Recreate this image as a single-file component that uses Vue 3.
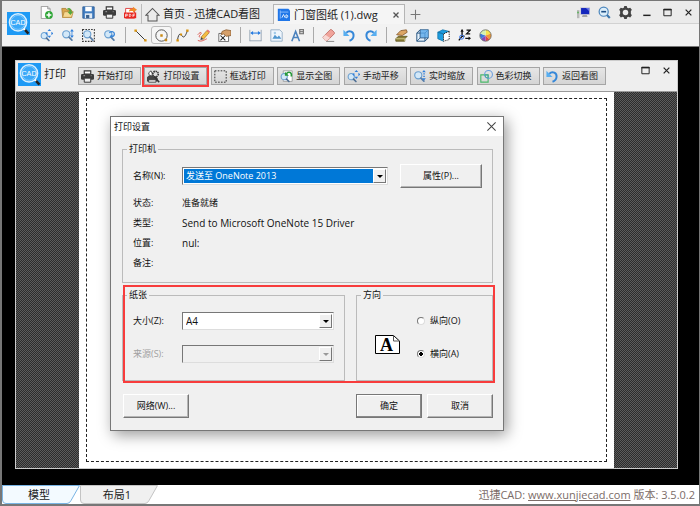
<script setup>
import { ref } from 'vue'

const lens = '<circle cx="6.5" cy="6.5" r="4.4" fill="#d3e8f8" stroke="#6a9fd0" stroke-width="1.4"/><path d="M9.800 10l3.600 3.600" stroke="#5a7fa8" stroke-width="2.2" stroke-linecap="round"/>'
const smallLens = '<circle cx="5.2" cy="8.2" r="3.8" fill="#d3e8f8" stroke="#6a9fd0" stroke-width="1.3"/><path d="M8 11.200l3 3" stroke="#4f6f94" stroke-width="2" stroke-linecap="round"/>'
const printer = '<path d="M4 1h8v4H4z" fill="#fff" stroke="#333" stroke-width="1.4"/><rect x="0" y="5" width="16" height="7" rx="1.6" fill="#3d3d3d"/><path d="M4 10h8v5H4z" fill="#eee" stroke="#333" stroke-width="1.2"/><path d="M3 7h2M12 7h1" stroke="#bbb"/>'
const panArrows = '<path d="M11.500 0l2.200 2.600H9.300zM11.500 11L9.300 8.400h4.400zM6.500 5.500L9 3.300v4.400zM16.500 5.500L14 3.300v4.400z" fill="#2f7fdc"/>'

const icons = {
  logo: '<rect width="24" height="24" fill="#1e9af5"/><circle cx="11.5" cy="10.8" r="9" fill="#3aa8f8" stroke="#d9f0ff" stroke-width="1.5"/><circle cx="11.5" cy="10.8" r="7.3" fill="none" stroke="#8fd0ff" stroke-width=".8"/><path d="M17.5 17.5l2 2" stroke="#fff" stroke-width="2"/><path d="M18.8 18.6l3.6 4" stroke="#222" stroke-width="2.6"/><text x="11.5" y="13.6" font-size="7.5" text-anchor="middle" fill="#fff" font-family="Liberation Sans, sans-serif">CAD</text>',
  file: '<path d="M1.500.500h8l3 3v12h-11z" fill="#fdfdfd" stroke="#8d8d8d"/><path d="M9.500.500v3h3" fill="#ddd" stroke="#8d8d8d"/><circle cx="11" cy="11" r="4.800" fill="#2fa637"/><path d="M11 8v6M8 11h6" stroke="#fff" stroke-width="1.800"/>',
  open: '<path d="M1 3h5l1.500 2H13v9H2z" fill="#d9a74e" stroke="#ae8035"/><path d="M2 14l2-7h11l-2 7z" fill="#f6d891" stroke="#b98b40"/><path d="M7 4c2-3 6-2 6 3h2l-3.500 4L8 7h2.500C10.500 5 9 4 7 4z" fill="#55a63d"/>',
  save: '<path d="M1 1h14v14H1z" fill="#3f7cc0" stroke="#2c5a92"/><path d="M4 1h8v5.500H4z" fill="#fff"/><path d="M3.500 9h9v6h-9z" fill="#dfe9f4"/><path d="M5 11h4v4H5z" fill="#3a628e"/>',
  print: printer,
  pdf: '<path d="M2 3h9l2 2v10H2z" fill="#fff" stroke="#d22"/><rect x="0" y="8" width="15" height="7" fill="#e8261f"/><path d="M2 13.500V10h2v2H2M6.500 10v3h1.200l.8-1v-1l-.8-1zM11 13.500V10h2.500M11 11.800h2" stroke="#fff" stroke-width=".9" fill="none"/><path d="M6 7c0-3 2-4 5-4V1l5 3.500L11 8V6c-2 0-3.500 0-5 1z" fill="#f08a28"/>',
  home: '<path d="M1 8.700L8 1.500l7 7.200h-2.200V15H3.200V8.700z" fill="none" stroke="#555" stroke-width="1.100"/>',
  dwg: '<path d="M1 1h13l2 2v13H1z" fill="#2076e8"/><path d="M4 3v10M4 5h10" stroke="#9cc6ff"/><path d="M6 12l2-4 2 4M11 8.500V12h1.200l1-1V9.500l-1-1z" fill="none" stroke="#fff"/>',
  monitor: '<path d="M0 5h3v10H0z" fill="#b8b8b8"/><rect x=".5" y="7" width="1.500" height="2" fill="#35b335"/><rect x="4" y="1.500" width="12" height="9.500" fill="#c9c9d6"/><rect x="5" y="2.500" width="10" height="7.500" fill="#1426bd"/><path d="M11 2.500h4v4z" fill="#6674e6"/><path d="M7 11h5l1 2.500H6z" fill="#a5a5a5"/>',
  zoomOut: '<circle cx="7" cy="7" r="5.600" fill="#dceefa" stroke="#4b86bd" stroke-width="1.500"/><path d="M4 7h6" stroke="#1d4e84" stroke-width="2"/><path d="M11 11l3.500 3.700" stroke="#3b76ac" stroke-width="2.600"/>',
  gear: '<path d="M6.500 0h3l.6 2.200 1.500.7 2.200-.9 2 2.500-1.200 2v3l1.200 2-2 2.500-2.200-.9-1.500.7L9.500 16h-3l-.6-2.200-1.500-.7-2.200.9-2-2.500 1.200-2v-3l-1.200-2L2.200 2l2.200.9 1.500-.7z" fill="#444"/><circle cx="8" cy="8" r="3.400" fill="#ededed"/>',
  minimize: '<path d="M4 11.500h9" stroke="#222" stroke-width="1.800"/>',
  maximize: '<path d="M3.500 4h9v8h-9z" fill="none" stroke="#222" stroke-width="1.200"/><path d="M3 4.500h10" stroke="#222" stroke-width="1.800"/>',
  close: '<path d="M4.500 4.500l7 7M11.500 4.500l-7 7" stroke="#222" stroke-width="1.500"/>',
  tabClose: '<path d="M3 3l10 10M13 3L3 13" stroke="#555" stroke-width="2.600"/>',
  plus: '<path d="M8 2v12M2 8h12" stroke="#777" stroke-width="1.300"/>',
  pan: smallLens + panArrows,
  zoomV: lens + '<path d="M13.500 0l2.300 3h-4.600zM13.500 11l-2.300-3h4.600zM13 3h1v5h-1z" fill="#2f7fdc"/>',
  zoomWin: '<path d="M.7.700h14.500v14.500H.700z" fill="none" stroke="#333" stroke-width="1.300" stroke-dasharray="2 1.500"/>' + lens,
  zoomBack: lens + '<path d="M8 5c1-3 6-2 6 1 0 2-1 3-3 3" fill="none" stroke="#3a86d8" stroke-width="1.600"/><path d="M11.500 6.500v5L8 9z" fill="#3a86d8"/>',
  line: '<path d="M2 2l12 12" stroke="#333" stroke-width="1.200"/><path d="M.500.500h3v3h-3zM12.500 12.500h3v3h-3z" fill="#d9930d"/>',
  circle: '<circle cx="8" cy="8" r="7" fill="none" stroke="#555" stroke-width="1.200"/><path d="M6.500 6.500h3v3h-3zM12 12h3v3h-3z" fill="#c98a16"/>',
  spline: '<path d="M2 13C3 6 5 5 7 8s4 3 7-6" fill="none" stroke="#333" stroke-width="1.200"/><path d="M.500 12.500h3v3h-3zM5 5.500h2.500V8H5zM12.500.500h3v3h-3z" fill="#d9930d"/>',
  pencil: '<path d="M5 10l7-8 3 2.500-7 8z" fill="#f5bd43" stroke="#a66e1b" stroke-width=".8"/><path d="M12 2l1.200-1.500 2.800 2.500-1 1.500z" fill="#e87474"/><path d="M5 10l-.8 3.500L8 12.500z" fill="#444"/><path d="M1 7c3-4 6-3 3 0s0 3 0 3M1 14c4 2 7 0 11-2" stroke="#d63b32" fill="none"/>',
  stamp: '<path d="M1 5.500h12v10H1z" fill="#fff" stroke="#555"/><path d="M3 8l6 6M9 8l-6 6" stroke="#222" stroke-width="1.300"/><path d="M5 3l5-2 6 1v6l-6 1-3-3-3 1z" fill="#d6a06a" stroke="#8c5e33"/>',
  dim: '<path d="M1 1v14M15 1v14M1 14.500h14" stroke="#8b9cae"/><path d="M3 5h10" stroke="#287ce0" stroke-width="1.300"/><path d="M1.500 5l3.500-2.500v5zM14.500 5L11 2.500v5z" fill="#287ce0"/>',
  image: '<path d="M1 1h11l3 3v11H1z" fill="#eef5fc" stroke="#8aa6bf"/><path d="M3 12l3-5 3 3 2-2 3 4z" fill="#4f96cf"/><circle cx="6" cy="5" r="1.500" fill="#a1c9e8"/>',
  text: '<path d="M1 15L5.700 3 10.500 15M2.800 10.500h6" fill="none" stroke="#4b82bd" stroke-width="1.900"/><path d="M10 0h6v6.500h-6z" fill="#777"/><path d="M11.500 2h3M11.500 4.500h3" stroke="#fff"/>',
  eraser: '<path d="M1 10l9-9q1-1 2 0l3 3q1 1 0 2l-8 8H4z" fill="#f0a39a" stroke="#bb6b63"/><path d="M1 10l3-3 6 4-4 3.500H4z" fill="#f7d6d1"/><path d="M5 15.300h10" stroke="#777"/>',
  undo: '<path d="M4 4.500c4-3.500 9.500-1 9 4-.3 3-2 5-5 6" fill="none" stroke="#3587d8" stroke-width="2.400"/><path d="M.500 1v7.500H8z" fill="#58aef0"/>',
  redo: '<path d="M12 4.500c-4-3.500-9.500-1-9 4 .3 3 2 5 5 6" fill="none" stroke="#3587d8" stroke-width="2.400"/><path d="M15.500 1v7.500H8z" fill="#58aef0"/>',
  layers: '<path d="M1 12l3-3h11l-3 3v3H1z" fill="#8a7e36" stroke="#5f551f"/><path d="M1 12h11v3" fill="none" stroke="#ddd49a"/><path d="M2 7l5-5 7-1 1 3-6 4z" fill="#dca565" stroke="#83562a"/>',
  cube: '<path d="M1 5h10v10H1zM1 5l4-4h10l-4 4M15 1v10l-4 4" fill="#e5f2fc" stroke="#26537f" stroke-width="1.200"/><path d="M5 1h10v10H5z" fill="#5aa8e8" opacity=".8"/><path d="M5 1v10h10M5 11l-4 4" stroke="#26537f" fill="none"/>',
  cubeDash: '<path d="M1 4l6-3 8 2v10l-7 2-7-3z" fill="#fff"/><path d="M1 4l6-3 8 2-7 3zM1 4l7 2v9l-7-3z" fill="#1d9de0" stroke="#1675a9"/><path d="M15 3v10l-7 2V6z" fill="#fff" stroke="#222" stroke-width="1.200" stroke-dasharray="1.500 1.200"/>',
  axes: '<path d="M5 1v8l-4 5M5 9h3" fill="none" stroke="#111" stroke-width="1.700"/><path d="M3 3.500L5 0l2 3.500z" fill="#111"/><circle cx="4.500" cy="10" r="2.500" fill="none" stroke="#3a77ee" stroke-width="1.200"/><path d="M10.500 1.500H15l-4.500 4.500H15M9 11.500h5" fill="none" stroke="#111" stroke-width="1.500"/><path d="M13 9.200l3 2.300-3 2.300z" fill="#111"/>',
  palette: '<circle cx="8" cy="8" r="7" fill="#fff"/><path d="M8 8V1a7 7 0 0 1 6.500 4.500z" fill="#f7e34c"/><path d="M8 8l6.500-2.500a7 7 0 0 1-1.500 7.400z" fill="#f19a36"/><path d="M8 8l5 4.900A7 7 0 0 1 8 15z" fill="#e04545"/><path d="M8 8v7a7 7 0 0 1-5.500-2.700z" fill="#8847ba"/><path d="M8 8l-5.500 4.300A7 7 0 0 1 1.500 5.500z" fill="#3d77dc"/><path d="M8 8L1.500 5.500A7 7 0 0 1 8 1z" fill="#d3f0b0"/><circle cx="8" cy="8" r="7" fill="none" stroke="#666"/>',
  printSetup: '<path d="M0 9l2-2h9l2 3v4H0z" fill="#444"/><path d="M2 12h9v3H2z" fill="#eee" stroke="#333"/><path d="M2 3.500L5 1l2 5-4 1z" fill="#fff" stroke="#333"/><circle cx="10.500" cy="5" r="3.400" fill="#ddd" stroke="#333" stroke-width="2" stroke-dasharray="1.800 .8"/><path d="M9 8l6 7" stroke="#333" stroke-width="1.800"/>',
  frame: '<path d="M1 1h14v14H1z" fill="none" stroke="#333" stroke-width="1.200" stroke-dasharray="2 1.600"/>',
  fit: '<path d="M4 1h11v13H4z" fill="#fff" stroke="#999"/>' + smallLens + '<path d="M8 5c1-3 5-3 6 0v3" fill="none" stroke="#28993a" stroke-width="2"/><path d="M6 2v5h5z" fill="#28993a"/>',
  realtime: lens + '<path d="M13.500 0l2.300 2.800h-4.600zM13.500 13l-2.300-2.800h4.600zM12.700 4h1.800v1.500h-1.800zM12.700 7h1.800v1.500h-1.800z" fill="#2f7fdc"/>',
  colors: '<path d="M1 6h9v9H1z" fill="none" stroke="#4ab96a" stroke-width="1.400"/><circle cx="10.500" cy="5.500" r="4.800" fill="none" stroke="#6a9ede" stroke-width="1.300"/><path d="M6 6h4v4q-4 0-4-4z" fill="none" stroke="#3aa3a0"/>'
}

const fileTools = [
  ['file', '新建'], ['open', '打开'], ['save', '保存'], ['print', '打印'], ['pdf', 'PDF']
]
const windowTools = [
  ['monitor', '屏幕'], ['zoomOut', '缩小'], ['gear', '设置'],
  ['minimize', '最小化'], ['maximize', '最大化'], ['close', '关闭']
]
const toolGroups = [
  [['pan', '平移'], ['zoomV', '缩放'], ['zoomWin', '窗口缩放'], ['zoomBack', '上一视图']],
  [['line', '直线'], ['circle', '圆'], ['spline', '曲线'], ['pencil', '铅笔'], ['stamp', '图章']],
  [['dim', '标注'], ['image', '图像'], ['text', '文字']],
  [['eraser', '擦除'], ['undo', '撤销'], ['redo', '重做']],
  [['layers', '图层'], ['cube', '立方体'], ['cubeDash', '线框'], ['axes', '坐标'], ['palette', '颜色']]
]
const printTools = [
  ['print', '开始打印'], ['printSetup', '打印设置'], ['frame', '框选打印'], ['fit', '显示全图'],
  ['pan', '手动平移'], ['realtime', '实时缩放'], ['colors', '色彩切换'], ['undo', '返回看图']
]
const details = [
  { name: '状态:', value: '准备就绪' },
  { name: '类型:', value: 'Send to Microsoft OneNote 15 Driver', latin: true },
  { name: '位置:', value: 'nul:', latin: true },
  { name: '备注:', value: '' }
]
const orientation = ref('landscape')
</script>

<template>
  <div class="app">
    <header class="header">
      <svg class="logo" viewBox="0 0 24 24" v-html="icons.logo"></svg>
      <div class="bars">
        <div class="bar bar-top">
          <button v-for="[icon, label] in fileTools" :key="icon" class="tool" :aria-label="label">
            <svg viewBox="0 0 16 16" v-html="icons[icon]"></svg>
          </button>
          <nav class="tabs">
            <a class="tab" href="#">
              <svg class="home" viewBox="0 0 16 16" v-html="icons.home"></svg>首页 - 迅捷CAD看图
            </a>
            <a class="tab tab-active" href="#">
              <svg viewBox="0 0 16 16" v-html="icons.dwg"></svg>
              <span class="tab-name">门窗图纸 (1).dwg</span>
              <svg class="tab-close" viewBox="0 0 16 16" v-html="icons.tabClose"></svg>
            </a>
            <button class="tool add" aria-label="新标签">
              <svg viewBox="0 0 16 16" v-html="icons.plus"></svg>
            </button>
          </nav>
          <div class="window-tools">
            <button v-for="[icon, label] in windowTools" :key="icon" class="tool" :aria-label="label">
              <svg viewBox="0 0 16 16" v-html="icons[icon]"></svg>
            </button>
          </div>
        </div>
        <div class="bar bar-bottom">
          <div v-for="(group, i) in toolGroups" :key="i" class="group">
            <button
              v-for="[icon, label] in group" :key="icon"
              :class="['tool', { picked: icon === 'circle' }]" :aria-label="label"
            >
              <svg viewBox="0 0 16 16" v-html="icons[icon]"></svg>
            </button>
          </div>
        </div>
      </div>
    </header>

    <main class="canvas">
      <section class="print">
        <div class="print-head">
          <svg class="logo" viewBox="0 0 24 24" v-html="icons.logo"></svg>
          <span class="print-title">打印</span>
          <div class="print-tools">
            <button
              v-for="[icon, label] in printTools" :key="label"
              :class="['print-tool', { marked: icon === 'printSetup' }]"
            >
              <svg viewBox="0 0 16 16" v-html="icons[icon]"></svg>{{ label }}
            </button>
          </div>
          <div class="print-window-tools">
            <button class="tool" aria-label="最大化"><svg viewBox="0 0 16 16" v-html="icons.maximize"></svg></button>
            <button class="tool" aria-label="关闭"><svg viewBox="0 0 16 16" v-html="icons.close"></svg></button>
          </div>
        </div>
        <div class="stage">
          <div class="sheet"><div class="margin-line"></div></div>

          <form class="dialog" role="dialog" aria-labelledby="dialog-title" @submit.prevent>
            <div class="dialog-title">
              <span id="dialog-title">打印设置</span>
              <button type="button" class="dialog-close" aria-label="关闭">
                <svg viewBox="0 0 16 16"><path d="M2 2l12 12M14 2L2 14" stroke="#444" stroke-width="1.500" /></svg>
              </button>
            </div>
            <div class="dialog-body">
              <fieldset class="box printer-box">
                <legend>打印机</legend>
                <div class="printer-row">
                  <label for="printer">名称(N):</label>
                  <div class="combo">
                    <select id="printer" class="selected"><option>发送至 OneNote 2013</option></select>
                    <span class="arrow"></span>
                  </div>
                  <button type="button" class="btn btn-wide">属性(P)...</button>
                </div>
                <dl class="details">
                  <template v-for="row in details" :key="row.name">
                    <dt>{{ row.name }}</dt><dd :class="{ latin: row.latin }">{{ row.value }}</dd>
                  </template>
                </dl>
              </fieldset>

              <div class="marked-area">
                <fieldset class="box paper-box">
                  <legend>纸张</legend>
                  <div class="paper-grid">
                    <label for="size">大小(Z):</label>
                    <div class="combo">
                      <select id="size" class="latin"><option>A4</option></select>
                      <span class="arrow"></span>
                    </div>
                    <label for="source" class="off">来源(S):</label>
                    <div class="combo combo-off">
                      <select id="source" disabled></select>
                      <span class="arrow"></span>
                    </div>
                  </div>
                </fieldset>
                <fieldset class="box direction-box">
                  <legend>方向</legend>
                  <div class="direction">
                    <svg class="page-icon" viewBox="0 0 25 19">
                      <path d="M.5.500h18l6 5.500v12.500H.500z" fill="#fff" stroke="#000" />
                      <path d="M18.500.500V6h6" fill="none" stroke="#555" />
                      <text x="11.500" y="15.500" font-family="Liberation Serif, serif" font-weight="bold" font-size="18" text-anchor="middle">A</text>
                    </svg>
                    <div class="radios">
                      <label><input v-model="orientation" type="radio" name="orientation" value="portrait">纵向(O)</label>
                      <label><input v-model="orientation" type="radio" name="orientation" value="landscape">横向(A)</label>
                    </div>
                  </div>
                </fieldset>
              </div>

              <div class="actions">
                <button type="button" class="btn">网络(W)...</button>
                <button type="submit" class="btn btn-default">确定</button>
                <button type="button" class="btn">取消</button>
              </div>
            </div>
          </form>
        </div>
      </section>
    </main>

    <footer class="status">
      <a class="sheet-tab" href="#">
        <svg viewBox="0 0 78 19" preserveAspectRatio="none"><path d="M.5 0v15q0 3.500 3.500 3.500h61q2.500 0 4-3L77.500.500H.500" fill="#f3faff" stroke="#79b4e4" /></svg>
        <span>模型</span>
      </a>
      <a class="sheet-tab" href="#">
        <svg viewBox="0 0 78 19" preserveAspectRatio="none"><path d="M.5 0v15q0 3.500 3.500 3.500h61q2.500 0 4-3L77.500.500H.500" fill="#f0f0f0" stroke="#c4c4c4" /></svg>
        <span>布局1</span>
      </a>
      <p class="version">迅捷CAD: <a href="#">www.xunjiecad.com</a> 版本: 3.5.0.2</p>
    </footer>
  </div>
</template>

<style>
body {
  margin: 0;
}
</style>

<style scoped>
.app {
  box-sizing: border-box;
  min-height: 100vh;
  display: flex;
  flex-direction: column;
  border: 2px solid #777;
  border-top-width: 1px;
  border-right-width: 1px;
  font: 11px/16px "Open Sans", "Noto Sans CJK SC", sans-serif;
  color: #222;
}
button, select, input {
  font: inherit;
  color: inherit;
  margin: 0;
}
a {
  color: inherit;
  text-decoration: none;
}
svg {
  display: block;
  flex: none;
}
.logo {
  width: 23px;
  height: 23px;
}
.header {
  display: grid;
  grid-template-columns: 34px 1fr;
  background: linear-gradient(#ebebeb 22px, #d2d2d2 22px, #d2d2d2 23px, #f2f2f2 23px);
  border-bottom: 1px solid #777;
}
.header > .logo {
  align-self: end;
  margin: 0 0 11px 5px;
}
.bar {
  display: flex;
  height: 23px;
}
.bar-top {
  align-items: center;
}
.bar-bottom {
  align-items: center;
  height: 22px;
}
.tool {
  display: grid;
  place-items: center;
  box-sizing: border-box;
  width: 21px;
  height: 18px;
  padding: 0;
  border: 0;
  background: none;
}
.tool svg {
  width: 13px;
  height: 13px;
}
.picked {
  border: 1px solid #bbb;
  border-radius: 3px;
  background: #f6f6f6;
}
.group {
  display: flex;
}
.group + .group::before {
  content: "";
  width: 1px;
  margin: 1px 4px 1px 5px;
  background: #aaa;
}
.tabs {
  display: flex;
  align-self: stretch;
  margin-top: 3px;
}
.tab {
  display: flex;
  align-items: center;
  gap: 3px;
  box-sizing: border-box;
  width: 132px;
  padding: 0 4px 0 3px;
  border-left: 1px solid #bbb;
  white-space: nowrap;
  color: #222;
}
.tab svg {
  width: 13px;
  height: 13px;
}
.tab .home {
  width: 15px;
  height: 15px;
}
.tab-active {
  gap: 4px;
  background: #f5f5f5;
  border: 1px solid #b5b5b5;
  border-bottom: 0;
}
.tab-name {
  flex: 1;
}
.tab .tab-close {
  width: 8px;
  height: 8px;
}
.add {
  align-self: center;
}
.window-tools {
  display: flex;
  margin-left: auto;
}
.canvas {
  flex: 1;
  display: flex;
  padding: 13px 21px 16px 13px;
  background: #000;
}
.print {
  flex: 1;
  display: flex;
  flex-direction: column;
  background: #eee;
  border: 1px solid #ccc;
}
.print-head {
  display: flex;
  align-items: flex-start;
  height: 30px;
  border-bottom: 1px solid #999;
}
.print-head .logo {
  margin: 2px 3px 0 2px;
}
.print-title {
  width: 34px;
  margin-top: 5px;
}
.print-tools {
  flex: 1;
  display: flex;
  justify-content: space-between;
  max-width: 528px;
  margin-top: 6px;
}
.print-tool {
  display: flex;
  align-items: center;
  gap: 3px;
  box-sizing: border-box;
  width: 63px;
  height: 18px;
  padding: 0 2px;
  border: 1px solid #a5a5a5;
  background: linear-gradient(#e6e6e6, #d5d5d5);
  font-size: 9px;
  line-height: 14px;
  white-space: nowrap;
}
.print-tool svg {
  width: 13px;
  height: 13px;
}
.marked {
  outline: 2px solid #f83c3c;
}
.print-window-tools {
  display: flex;
  margin-left: auto;
}
.stage {
  position: relative;
  flex: 1;
  display: flex;
  padding: 0 63px;
  background: repeating-conic-gradient(#2c2c2c 0 25%, #5c5c5c 0 50%) 0 0 / 2px 2px;
}
.sheet {
  flex: 1;
  display: flex;
  padding: 6px 7px;
  background: #fff;
}
.margin-line {
  flex: 1;
  border: 1px dashed #222;
}
.dialog {
  position: absolute;
  left: 94px;
  top: 24px;
  box-sizing: border-box;
  width: 394px;
  border: 1px solid #777;
  background: #f0f0f0;
  box-shadow: 3px 4px 14px rgba(0, 0, 0, 0.4);
  font-size: 9px;
  line-height: 12px;
  color: #111;
}
.dialog-title {
  display: flex;
  align-items: center;
  justify-content: space-between;
  height: 19px;
  padding: 0 6px 0 3px;
  background: #fff;
}
.dialog-close {
  padding: 0;
  border: 0;
  background: none;
}
.dialog-close svg {
  width: 11px;
  height: 11px;
}
.dialog-body {
  padding: 7px 10px 12px 11px;
}
.box {
  min-width: 0;
  margin: 0;
  padding: 0 10px;
  border: 1px solid #bbb;
}
.box legend {
  margin-left: -6px;
  padding: 0 2px;
}
.printer-box {
  padding-bottom: 9px;
}
.printer-row {
  display: grid;
  grid-template-columns: 49px 206px 94px;
  align-items: center;
  padding-top: 9px;
}
.printer-row .btn {
  justify-self: end;
}
.latin {
  font-size: 10px;
}
.combo {
  display: grid;
  box-sizing: border-box;
  height: 18px;
  padding: 1px;
  border: 1px solid;
  border-color: #777 #ddd #ddd #777;
  background: #fff;
}
.combo select,
.arrow {
  grid-area: 1 / 1;
}
.combo select {
  appearance: none;
  width: 100%;
  padding: 0 0 0 2px;
  border: 0;
  border-radius: 0;
  outline: 0;
  background: none;
  line-height: 14px;
}
.combo .selected {
  background: #0078d7;
  color: #fff;
}
.arrow {
  justify-self: end;
  display: grid;
  place-items: center;
  box-sizing: border-box;
  width: 13px;
  border: 1px solid;
  border-color: #fff #777 #777 #fff;
  background: #f0f0f0;
  pointer-events: none;
}
.arrow::before {
  content: "";
  border: 3px solid transparent;
  border-top-color: #000;
  border-bottom: 0;
}
.combo-off {
  background: #f0f0f0;
}
.combo-off .arrow::before {
  border-top-color: #999;
}
.off {
  color: #a0a0a0;
}
.btn {
  box-sizing: border-box;
  width: 66px;
  height: 24px;
  padding: 0;
  border: 1px solid;
  border-color: #fff #777 #777 #fff;
  box-shadow: inset -1px -1px #b5b5b5;
  background: #f0f0f0;
}
.btn-wide {
  width: 82px;
}
.btn-default {
  border-color: #777;
  box-shadow: inset -1px -1px #888, inset 1px 1px #fff;
}
.details {
  display: grid;
  grid-template-columns: 49px 1fr;
  grid-auto-rows: 20px;
  align-items: center;
  margin: 5px 0 0;
}
.details dd {
  margin: 0;
}
.marked-area {
  position: relative;
  display: grid;
  grid-template-columns: 223px 1fr;
  gap: 11px;
  margin-top: 6px;
}
.marked-area::after {
  content: "";
  position: absolute;
  inset: -4px -2px -2px 1px;
  border: 2px solid #f83c3c;
  pointer-events: none;
}
.paper-grid {
  display: grid;
  grid-template-columns: 49px 152px;
  grid-auto-rows: 18px;
  row-gap: 15px;
  align-items: center;
  padding: 11px 0 17px;
}
.direction {
  display: flex;
  align-items: center;
  gap: 17px;
  padding: 11px 0 17px 8px;
}
.page-icon {
  width: 25px;
  height: 19px;
  margin-top: 13px;
}
.radios {
  display: grid;
  grid-auto-rows: 18px;
  row-gap: 15px;
}
.radios label {
  display: flex;
  align-items: center;
  gap: 5px;
}
.radios input {
  appearance: none;
  box-sizing: border-box;
  width: 8px;
  height: 8px;
  border: 1px solid;
  border-color: #777 #ddd #ddd #777;
  border-radius: 50%;
  background: #fff;
}
.radios input:checked {
  background: radial-gradient(#000 0 1px, #000 2px, #fff 2px);
}
.actions {
  display: flex;
  gap: 5px;
  margin: 13px 0 0 1px;
}
.actions .btn-default {
  margin-left: auto;
}
.status {
  display: flex;
  align-items: center;
  height: 19px;
  background: #fff;
}
.sheet-tab {
  display: grid;
  place-items: center;
  width: 78px;
}
.sheet-tab svg {
  width: 78px;
  height: 19px;
}
.sheet-tab svg,
.sheet-tab span {
  grid-area: 1 / 1;
}
.sheet-tab span {
  z-index: 1;
  margin-right: 4px;
}
.version {
  margin: 0 4px 0 auto;
  color: #7b6c68;
}
.version a {
  text-decoration: underline;
}
</style>
